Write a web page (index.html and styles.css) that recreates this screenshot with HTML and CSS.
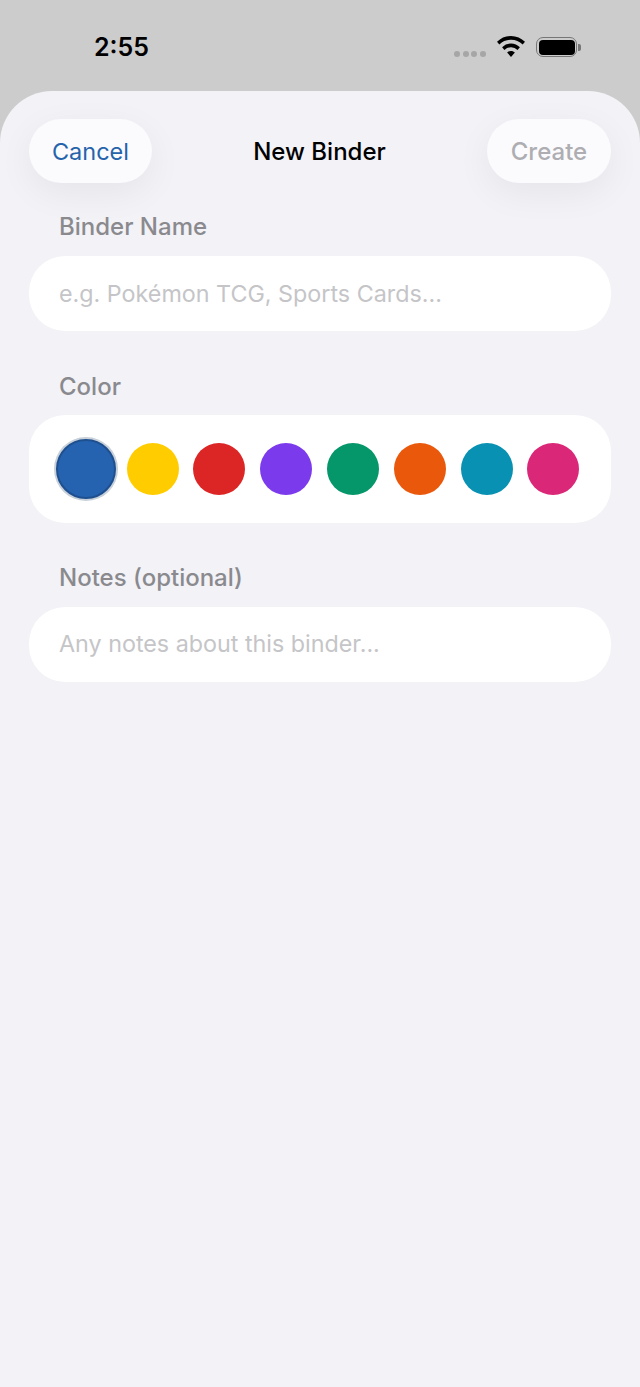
FILE: index.html
```html
<!DOCTYPE html>
<html lang="en">
  <head>
    <meta charset="UTF-8" />
    <meta name="viewport" content="width=device-width, initial-scale=1.0" />
    <title>New Binder</title>
    <link rel="stylesheet" href="styles.css">
  </head>
  <body>
    <div class="status-bar">
      <span class="time">2:55</span>
      <div class="status-icons">
        <div class="signal">
          <span></span><span></span><span></span><span></span>
        </div>
        <svg class="wifi" width="28" height="21" viewBox="1.4 2.2 25.2 18" preserveAspectRatio="none">
          <path d="M14 2.200c4.900 0 9.300 1.900 12.600 5l-2.100 2.300A15.200 15.200 0 0 0 14 5.400 15.200 15.200 0 0 0 3.500 9.500L1.400 7.200A18.300 18.300 0 0 1 14 2.200z" />
          <path d="M14 8.600c3.100 0 5.900 1.200 8 3.200l-2.100 2.300A8.500 8.500 0 0 0 14 11.800a8.500 8.500 0 0 0-5.900 2.300L6 11.800a11.600 11.600 0 0 1 8-3.200z" />
          <path d="M14 15c1.400 0 2.600.5 3.500 1.400L14 20.200l-3.500-3.800A5 5 0 0 1 14 15z" />
        </svg>
        <div class="battery">
          <div class="battery-body"><div class="battery-fill"></div></div>
          <div class="battery-cap"></div>
        </div>
      </div>
    </div>

    <div class="sheet">
      <div class="topbar">
        <button class="pill cancel">Cancel</button>
        <div class="title">New Binder</div>
        <button class="pill create">Create</button>
      </div>

      <div class="label label-first">Binder Name</div>
      <div class="field">e.g. Pokémon TCG, Sports Cards...</div>

      <div class="label label-color">Color</div>
      <div class="colors">
        <div class="swatch selected"><span class="dot blue"></span></div>
        <div class="swatch"><span class="dot yellow"></span></div>
        <div class="swatch"><span class="dot red"></span></div>
        <div class="swatch"><span class="dot purple"></span></div>
        <div class="swatch"><span class="dot green"></span></div>
        <div class="swatch"><span class="dot orange"></span></div>
        <div class="swatch"><span class="dot teal"></span></div>
        <div class="swatch"><span class="dot pink"></span></div>
      </div>

      <div class="label label-notes">Notes (optional)</div>
      <div class="field field-notes">Any notes about this binder...</div>
    </div>
  </body>
</html>
```

FILE: styles.css
```css
* {
  box-sizing: border-box;
}
html,
body {
  margin: 0;
  height: 100%;
}
body {
  display: flex;
  flex-direction: column;
  overflow: hidden;
  background: #cccccc;
  font-family: Inter, "Liberation Sans", sans-serif;
}

.status-bar {
  display: flex;
  justify-content: space-between;
  height: 91px;
  flex-shrink: 0;
  padding: 30px 59px 0 94px;
}
.time {
  font-size: 25px;
  line-height: 34px;
  font-weight: 600;
  color: #000;
}
.status-icons {
  display: flex;
  align-items: flex-start;
}
.signal {
  display: flex;
  gap: 2.700px;
  margin-top: 21px;
  margin-right: 11px;
}
.signal span {
  width: 6px;
  height: 6px;
  border-radius: 50%;
  background: #a6a6a6;
}
.wifi {
  margin-top: 6px;
  margin-right: 11px;
  fill: #000;
}
.battery {
  display: flex;
  align-items: center;
  margin-top: 7px;
}
.battery-body {
  width: 41px;
  height: 20px;
  padding: 1.500px;
  border: 1.500px solid #767676;
  border-radius: 7px;
}
.battery-fill {
  height: 100%;
  background: #000;
  border-radius: 4px;
}
.battery-cap {
  width: 3px;
  height: 7px;
  margin-left: 1px;
  background: #767676;
  border-radius: 0 2px 2px 0;
}

.sheet {
  flex: 1;
  padding: 28px 29px 0;
  background: #f2f2f7;
  border-radius: 52px 52px 0 0;
}
.topbar {
  display: flex;
  justify-content: space-between;
  align-items: center;
}
.pill {
  width: 124px;
  height: 64px;
  padding: 0;
  border: none;
  border-radius: 32px;
  background: #fbfbfe;
  font-family: inherit;
  font-size: 24px;
  box-shadow: 0 10px 36px rgba(0, 0, 0, 0.06);
}
.cancel {
  width: 123px;
  font-size: 23.500px;
  color: #2563ab;
}
.create {
  color: #aeaeb2;
  font-weight: 500;
}
.title {
  font-size: 24px;
  font-weight: 500;
  color: #000;
}

.label {
  padding-left: 30px;
  font-size: 24px;
  line-height: 32px;
  font-weight: 500;
  color: #8a8a8e;
}
.label-first {
  margin-top: 28px;
  margin-bottom: 13px;
}
.label-color {
  margin-top: 40px;
  margin-bottom: 12px;
}
.label-notes {
  margin-top: 39px;
  margin-bottom: 13px;
}

.field {
  height: 75px;
  padding-left: 30px;
  border-radius: 36px;
  background: #fff;
  font-size: 23.300px;
  line-height: 75px;
  color: #c5c5c8;
}
.field-notes {
  line-height: 73px;
}

.colors {
  display: flex;
  align-items: center;
  height: 108px;
  padding-left: 23.500px;
  border-radius: 36px;
  background: #fff;
}
.swatch {
  display: flex;
  justify-content: center;
  align-items: center;
  width: 66.800px;
  height: 64px;
  flex-shrink: 0;
}
.dot {
  width: 52px;
  height: 52px;
  flex-shrink: 0;
  border-radius: 50%;
}
.selected .dot {
  width: 60px;
  height: 60px;
  border: 2px solid #1e4f8f;
  box-shadow: 0 0 0 2px #c8d0d9;
}
.blue {
  background: #2563b0;
}
.yellow {
  background: #ffcc00;
}
.red {
  background: #dc2626;
}
.purple {
  background: #7c3aed;
}
.green {
  background: #059669;
}
.orange {
  background: #ea580c;
}
.teal {
  background: #0891b2;
}
.pink {
  background: #db2777;
}
```
